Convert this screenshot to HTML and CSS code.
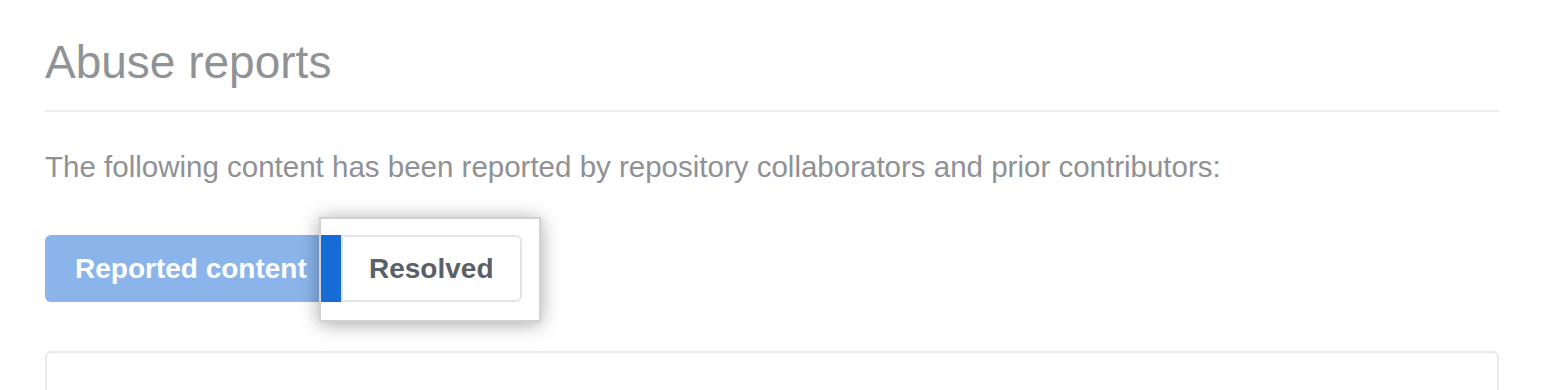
FILE: index.html
```html
<!DOCTYPE html>
<html lang="en">
<head>
    <meta charset="UTF-8">
    <meta name="viewport" content="width=device-width, initial-scale=1.0">
    <title>Abuse reports</title>
    <link rel="stylesheet" href="styles.css">
</head>
<body>
    <div class="container">
        <h1 class="subhead">Abuse reports</h1>

        <p class="intro">The following content has been reported by repository collaborators and prior contributors:</p>

        <div class="btn-group">
            <button class="btn btn-selected">Reported content</button>
            <button class="btn">Resolved</button>
            <!-- highlight around the tab we point at -->
            <div class="highlight"></div>
        </div>

        <div class="box"></div>
    </div>
</body>
</html>
```

FILE: styles.css
```css
* {
    margin: 0;
    padding: 0;
    box-sizing: border-box;
}

html, body {
    height: 100%;
    overflow: hidden;
}

body {
    font-family: 'Liberation Sans', Arial, sans-serif;
    background: white;
}

.container {
    margin-left: 45px;
    width: 1454px;
}

.subhead {
    padding-top: 33px;
    padding-bottom: 19px;
    font-size: 46px;
    line-height: 58px;
    font-weight: normal;
    color: #909296;
    border-bottom: 2px solid #ededed;
}

.intro {
    margin-top: 34px;
    font-size: 29.5px;
    line-height: 42px;
    color: #8f9195;
}

.btn-group {
    position: relative;
    display: flex;
    margin-top: 47px;
}

.btn {
    height: 67px;
    padding: 0 26px;
    font-family: inherit;
    font-size: 28px;
    font-weight: bold;
    color: #586069;
    background: white;
    border: 2px solid #e1e4e8;
    border-radius: 0 6px 6px 0;
}

.btn-selected {
    width: 296px;
    padding-left: 30px;
    text-align: left;
    color: white;
    border: none;
    border-radius: 6px 0 0 6px;
    background: linear-gradient(to right, #8ab4ea 276px, #176bd6 276px);
}

.highlight {
    position: absolute;
    left: 274px;
    top: -18px;
    width: 222px;
    height: 105px;
    border: 2px solid #d2d2d2;
    box-shadow: 0 2px 18px rgba(0,0,0,0.35);
    pointer-events: none;
}

.box {
    margin-top: 49px;
    height: 120px;
    border: 2px solid #e9e9e9;
    border-radius: 6px;
}
```
